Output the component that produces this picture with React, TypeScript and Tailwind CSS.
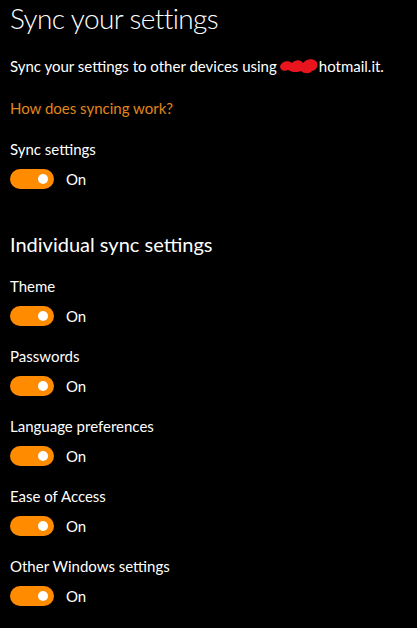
function Toggle() {
  return (
    <div className="flex items-center h-5">
      <div className="w-[44px] h-5 rounded-full bg-[#ff8c00] flex items-center justify-end pr-[6px]">
        <div className="w-[10px] h-[10px] rounded-full bg-white" />
      </div>
      <span className="ml-3 text-[15px] text-white">On</span>
    </div>
  )
}

function Setting({ label }: { label: string }) {
  return (
    <div className="flex flex-col">
      <div className="h-[20px] text-[15px] leading-[20px] text-white">{label}</div>
      <div className="mt-[10px]">
        <Toggle />
      </div>
    </div>
  )
}

export default function App() {
  const items = ["Theme", "Passwords", "Language preferences", "Ease of Access", "Other Windows settings"]

  return (
    <div className="w-[417px] h-[628px] bg-black px-[10px] overflow-hidden font-['Lato',sans-serif]">
      <h1 className="text-[28px] leading-[36px] font-light tracking-[-0.6px] text-white">Sync your settings</h1>

      <p className="mt-[20px] text-[15px] leading-[20px] text-white flex items-center">
        Sync your settings to other devices using
        <svg width="40" height="18" viewBox="0 0 40 18" className="ml-[2px]">
          <path
            d="M1 9 C3 4 9 3 13 6 C16 3 21 2 24 6 C27 2 33 1 37 4 C40 8 38 13 33 14 C31 17 25 17 22 14 C18 16 12 15 9 13 C5 15 1 13 1 9 Z"
            fill="#e8141e"
          />
        </svg>
        hotmail.it.
      </p>

      <a className="block mt-[22px] text-[15px] leading-[20px] text-[#e0861a]">How does syncing work?</a>

      <div className="mt-[21px]">
        <Setting label="Sync settings" />
      </div>

      <h2 className="mt-[41px] text-[20px] leading-[28px] text-white">Individual sync settings</h2>

      <div className="mt-[18px] flex flex-col gap-[20px]">
        {items.map((label) => (
          <Setting key={label} label={label} />
        ))}
      </div>
    </div>
  )
}
